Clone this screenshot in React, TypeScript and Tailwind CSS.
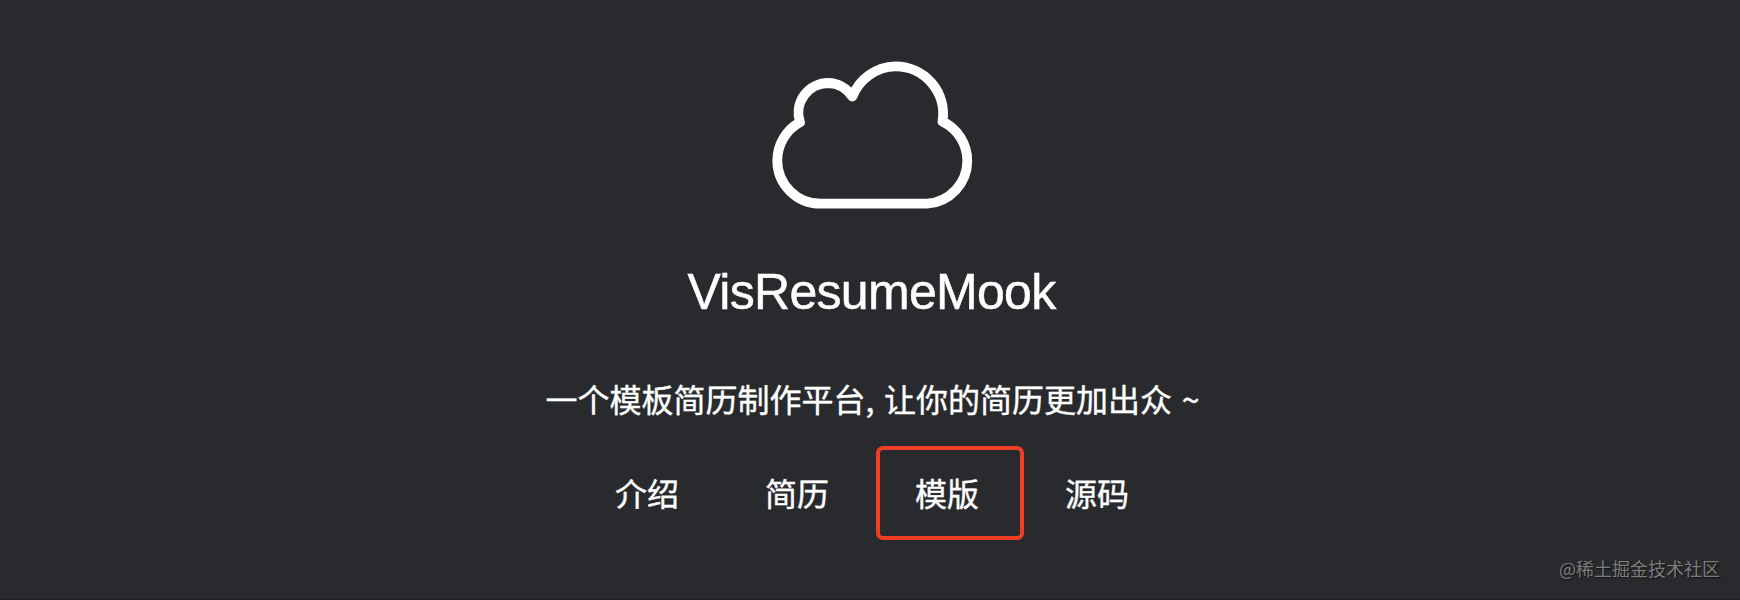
const links = ['介绍', '简历', '模版', '源码'];

function CloudLogo() {
  return (
    <svg
      className="block h-[190px] w-[240px]"
      viewBox="0 0 240 190"
      fill="none"
      stroke="#fff"
      strokeWidth="9.8"
      strokeLinecap="round"
      strokeLinejoin="round"
    >
      <path d="M70.8 163.7A43.4 43.2 0 0 1 27.3 120.7A43.6 43.6 0 0 1 50 82.3A29.8 29.8 0 0 1 78.3 43A29.8 29.8 0 0 1 102.4 56.5A47.5 47.5 0 0 1 145.3 26.3A47.6 47.6 0 0 1 192.5 81.5A43.6 43.6 0 0 1 217.3 120.7A43.4 43.2 0 0 1 177 163.7Z" />
    </svg>
  );
}

export default function App() {
  return (
    <main className="flex h-[600px] w-[1740px] flex-col items-center overflow-hidden border-b border-[#252122] bg-[#292a2d] pt-10 font-['Liberation_Sans','Noto_Sans_CJK_SC',sans-serif] text-white">
      <CloudLogo />
      <h1 className="mt-8 h-[60px] whitespace-nowrap pl-[3px] text-[50px] leading-[60px] tracking-[-0.7px] [-webkit-text-stroke:0.5px_white]">
        VisResumeMook
      </h1>
      <p className="mt-[52px] h-[48px] whitespace-nowrap pl-[5px] font-['Noto_Sans_CJK_SC',sans-serif] text-[32px] leading-[48px] [word-spacing:2.5px] [-webkit-text-stroke:0.4px_white]">
        一个模板简历制作平台, 让你的简历更加出众 ~
      </p>
      <nav className="mt-[24px] flex pl-3 font-['Noto_Sans_CJK_SC',sans-serif] text-[32px] leading-[48px] [-webkit-text-stroke:0.4px_white]">
        {links.map((label) => (
          <a
            key={label}
            className={
              label === '模版'
                ? 'mr-0.5 h-[94px] w-[148px] rounded-[7px] border-4 border-[#f03e26] pl-[35px] pt-[18px]'
                : 'h-[94px] w-[150px] pl-[39px] pt-[22px]'
            }
          >
            {label}
          </a>
        ))}
      </nav>
      <footer className="mt-[15px] self-end whitespace-nowrap pr-5 font-['Noto_Sans_CJK_SC',sans-serif] text-[18px] leading-[27px] text-[#7d7d7e] [text-shadow:1px_1px_1px_#111]">
        @稀土掘金技术社区
      </footer>
    </main>
  );
}
